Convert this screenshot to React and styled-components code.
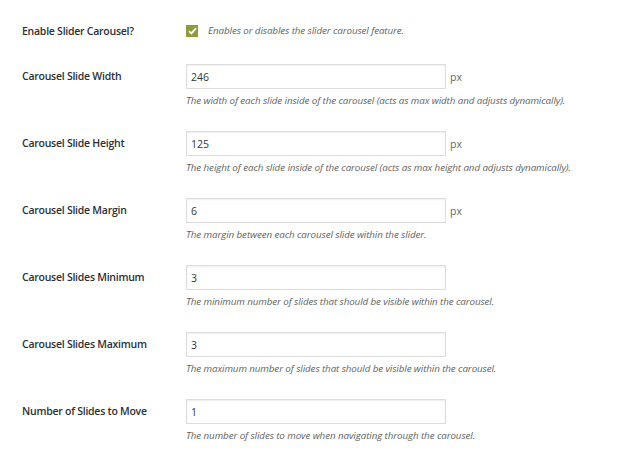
import styled, { createGlobalStyle } from 'styled-components';

const GlobalStyle = createGlobalStyle`
  html, body {
    margin: 0;
    padding: 0;
    background: #fff;
  }
  body {
    font-family: "Open Sans", "Noto Sans", sans-serif;
    color: #23282d;
  }
`;

const Form = styled.div`
  display: flex;
  flex-direction: column;
  gap: 23px;
  padding: 25px 0 0 22px;
`;

const Row = styled.div`
  display: flex;
  align-items: flex-start;
  margin-bottom: ${(p) => (p.first ? '4px' : '0')};
`;

const Label = styled.div`
  width: 164px;
  flex: none;
  font-size: 10.5px;
  font-weight: 600;
  letter-spacing: -0.25px;
  line-height: ${(p) => (p.small ? '12px' : '25px')};
  color: #2c3035;
`;

const Field = styled.div`
  display: flex;
  flex-direction: column;
`;

const InputLine = styled.div`
  display: flex;
  align-items: center;
  gap: 4px;
`;

const TextInput = styled.input`
  box-sizing: border-box;
  width: 260px;
  height: 25px;
  margin: 0;
  padding: 0 4px;
  border: 1px solid #ddd;
  border-radius: 0;
  box-shadow: inset 0 1px 2px rgba(0, 0, 0, 0.07);
  font-family: "Open Sans", "Noto Sans", sans-serif;
  font-size: 10.5px;
  color: #32373c;
  outline: none;
`;

const Unit = styled.span`
  font-size: 10.5px;
  color: #666;
`;

const Description = styled.p`
  margin: 5px 0 0;
  font-size: 9.8px;
  font-style: italic;
  line-height: 14px;
  letter-spacing: -0.1px;
  color: #5f5f5f;
`;

const CheckLine = styled.label`
  display: flex;
  align-items: center;
  gap: 10px;
  height: 12px;
`;

const CheckBox = styled.span`
  width: 12px;
  height: 12px;
  flex: none;
  background: #8c9b3e;
  display: flex;
  align-items: center;
  justify-content: center;
`;

const CheckText = styled(Description)`
  margin: 0;
  line-height: 12px;
`;

const fields = [
  {
    label: 'Carousel Slide Width',
    value: '246',
    unit: 'px',
    desc: 'The width of each slide inside of the carousel (acts as max width and adjusts dynamically).',
  },
  {
    label: 'Carousel Slide Height',
    value: '125',
    unit: 'px',
    desc: 'The height of each slide inside of the carousel (acts as max height and adjusts dynamically).',
  },
  {
    label: 'Carousel Slide Margin',
    value: '6',
    unit: 'px',
    desc: 'The margin between each carousel slide within the slider.',
  },
  {
    label: 'Carousel Slides Minimum',
    value: '3',
    desc: 'The minimum number of slides that should be visible within the carousel.',
  },
  {
    label: 'Carousel Slides Maximum',
    value: '3',
    desc: 'The maximum number of slides that should be visible within the carousel.',
  },
  {
    label: 'Number of Slides to Move',
    value: '1',
    desc: 'The number of slides to move when navigating through the carousel.',
  },
];

function App() {
  return (
    <>
      <GlobalStyle />
      <Form>
        <Row first>
          <Label small>Enable Slider Carousel?</Label>
          <CheckLine>
            <CheckBox>
              <svg width="9" height="8" viewBox="0 0 9 8">
                <path d="M1 4.2 L3.4 6.4 L8 1.2" fill="none" stroke="#fff" strokeWidth="1.8" />
              </svg>
            </CheckBox>
            <CheckText>Enables or disables the slider carousel feature.</CheckText>
          </CheckLine>
        </Row>
        {fields.map((f) => (
          <Row key={f.label}>
            <Label>{f.label}</Label>
            <Field>
              <InputLine>
                <TextInput defaultValue={f.value} />
                {f.unit && <Unit>{f.unit}</Unit>}
              </InputLine>
              <Description>{f.desc}</Description>
            </Field>
          </Row>
        ))}
      </Form>
    </>
  );
}

export default App;
